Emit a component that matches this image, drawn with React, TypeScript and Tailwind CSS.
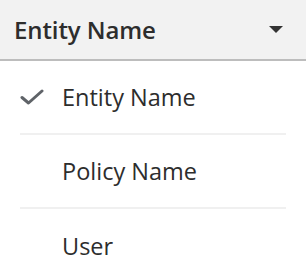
import React from "react";

const items = [
  { label: "Entity Name", selected: true },
  { label: "Policy Name", selected: false },
  { label: "User", selected: false },
];

const Check = () => (
  <svg width="24" height="16" viewBox="0 0 24 16" fill="none">
    <path
      d="M2 8.5 L8.5 14 L22 2"
      stroke="#5f6368"
      strokeWidth="3"
      strokeLinecap="round"
      strokeLinejoin="round"
    />
  </svg>
);

export default function App() {
  return (
    <div
      className="w-[306px] h-[280px] bg-white overflow-hidden flex flex-col text-[#2d2d2d]"
      style={{ fontFamily: '"Open Sans", sans-serif' }}
    >
      <div className="h-[61px] shrink-0 bg-[#f2f2f2] border-b-2 border-[#bdbdbd] flex items-center justify-between pl-[14px] pr-[23px]">
        <span className="text-[24px] font-semibold tracking-[-0.1px]">Entity Name</span>
        <span className="w-0 h-0 border-l-[7px] border-r-[7px] border-t-[7px] border-l-transparent border-r-transparent border-t-[#333]" />
      </div>

      <ul className="flex-1 flex flex-col px-[20px]">
        {items.map((item, i) => (
          <li
            key={item.label}
            className={
              "h-[74px] shrink-0 flex items-center " +
              (i < items.length - 1 ? "border-b-2 border-[#f0f0f0]" : "")
            }
          >
            <span className="w-[42px] flex items-center">
              {item.selected && <Check />}
            </span>
            <span className="text-[23.5px] pt-[2px]">{item.label}</span>
          </li>
        ))}
      </ul>

      <div className="h-[3px] shrink-0 bg-[#fdeba0]" />
    </div>
  );
}
